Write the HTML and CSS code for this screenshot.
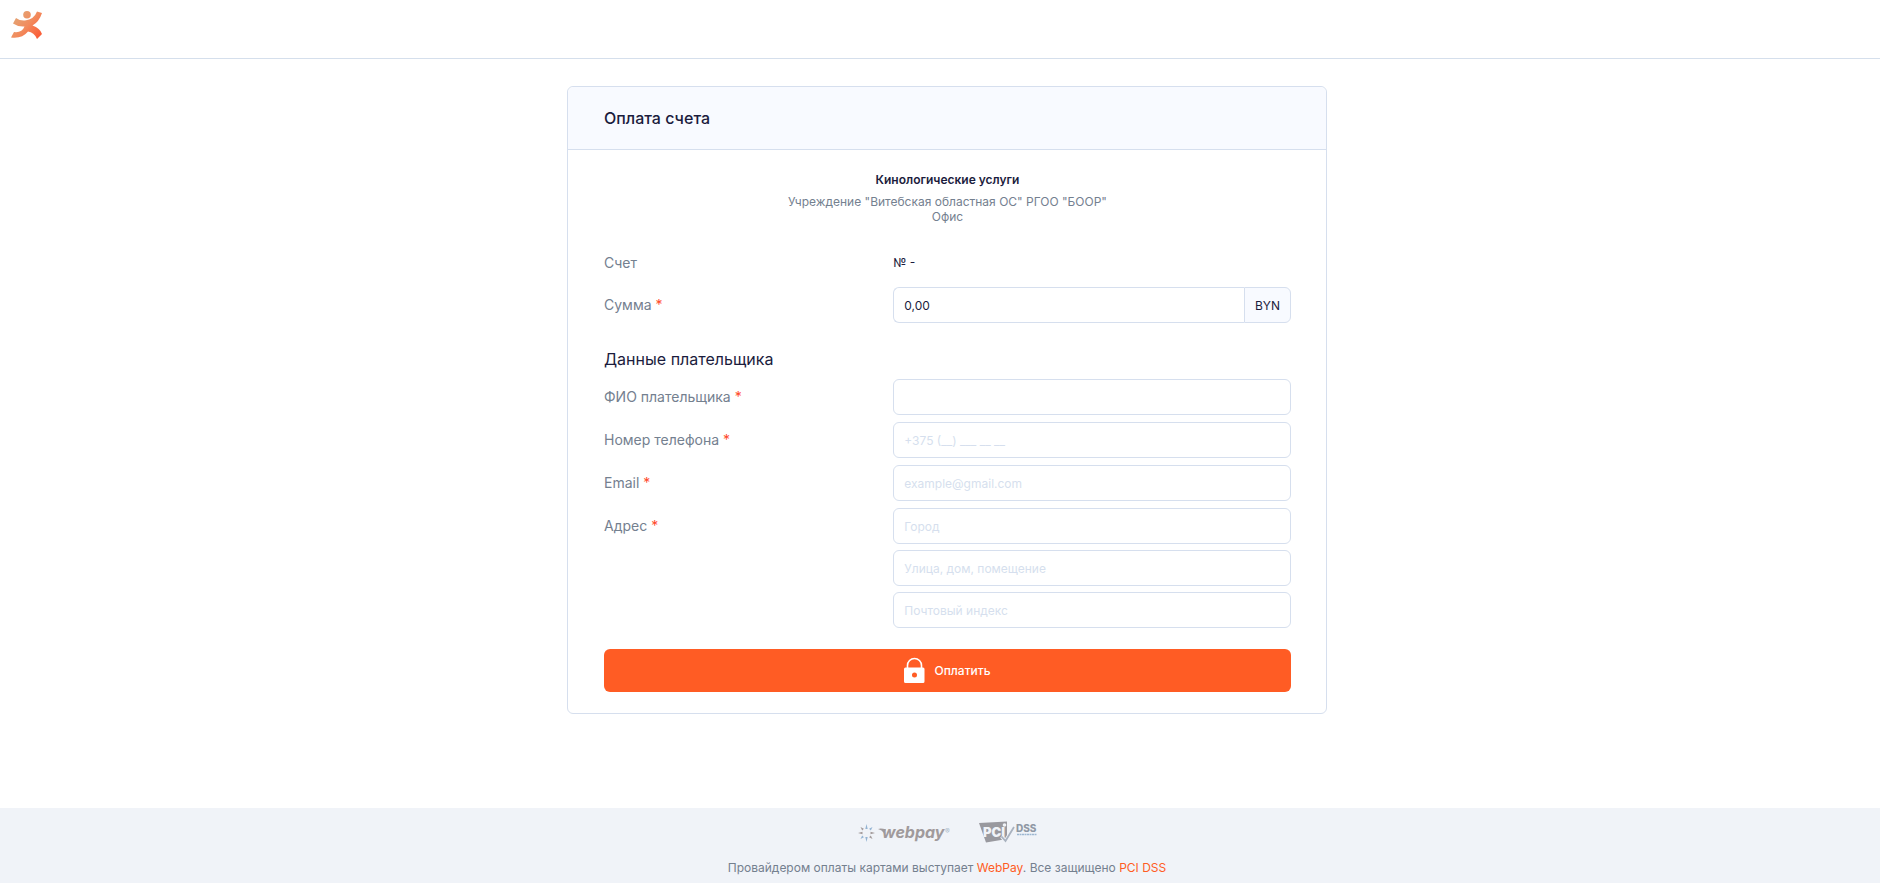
FILE: index.html
```html
<!DOCTYPE html>
<html lang="ru">
<head>
    <meta charset="UTF-8">
    <meta name="viewport" content="width=device-width, initial-scale=1.0">
    <title>Оплата счета</title>
    <link rel="stylesheet" href="styles.css">
</head>
<body>
    <header class="header">
        <a class="header-logo" href="#" aria-label="Главная">
            <svg width="31" height="28" viewBox="0 0 31 28">
                <defs>
                    <linearGradient id="runner" gradientUnits="userSpaceOnUse" x1="4" y1="4" x2="28" y2="26">
                        <stop offset="0" stop-color="#e3a676"/>
                        <stop offset="0.5" stop-color="#f28b5d"/>
                        <stop offset="1" stop-color="#fb5c36"/>
                    </linearGradient>
                </defs>
                <g fill="url(#runner)">
                    <circle cx="16" cy="3.800" r="3.800"/>
                    <path d="M5 7Q9 10 14 9.500Q23 8.500 26 0.500L31 2Q28 11 21.500 14.500Q29 17 31 23L26 28Q23 21 17 20.500Q11 28 0 26.500L3 21Q11 22 13.500 15.500Q7 16 2 12.500Z"/>
                </g>
            </svg>
        </a>
    </header>

    <main class="main">
        <form class="card">
            <div class="card-header">
                <h1 class="card-title">Оплата счета</h1>
            </div>
            <div class="card-body">
                <div class="service">
                    <h2 class="service-name">Кинологические услуги</h2>
                    <p class="service-owner">Учреждение "Витебская областная ОС" РГОО "БООР"<br>Офис</p>
                </div>

                <div class="row row-text">
                    <span class="label">Счет</span>
                    <span class="value">№ -</span>
                </div>
                <div class="row">
                    <label class="label" for="sum">Сумма <span class="required">*</span></label>
                    <div class="input-group">
                        <input class="input" id="sum" type="text" value="0,00">
                        <span class="input-addon">BYN</span>
                    </div>
                </div>

                <h2 class="section-title">Данные плательщика</h2>

                <div class="row">
                    <label class="label" for="fio">ФИО плательщика <span class="required">*</span></label>
                    <input class="input" id="fio" type="text">
                </div>
                <div class="row">
                    <label class="label" for="phone">Номер телефона <span class="required">*</span></label>
                    <input class="input" id="phone" type="tel" placeholder="+375 (__) ___ __ __">
                </div>
                <div class="row">
                    <label class="label" for="email">Email <span class="required">*</span></label>
                    <input class="input" id="email" type="email" placeholder="example@gmail.com">
                </div>
                <div class="row">
                    <label class="label" for="city">Адрес <span class="required">*</span></label>
                    <div class="input-stack">
                        <input class="input" id="city" type="text" placeholder="Город">
                        <input class="input" type="text" aria-label="Улица, дом, помещение" placeholder="Улица, дом, помещение">
                        <input class="input" type="text" aria-label="Почтовый индекс" placeholder="Почтовый индекс">
                    </div>
                </div>

                <button class="pay-button" type="submit">
                    <svg width="21" height="27" viewBox="0 0 21 27">
                        <path d="M3.500 11V8.500a7 7 0 0 1 14 0V11" fill="none" stroke="#fff" stroke-width="1.600"/>
                        <path fill="#fff" fill-rule="evenodd" d="M1.500 10.500H19Q20.500 10.500 20.500 12V24.500Q20.500 26 19 26H1.500Q0 26 0 24.500V12Q0 10.500 1.500 10.500ZM10.500 15.500a2.500 2.500 0 1 0 0 5a2.500 2.500 0 1 0 0-5Z"/>
                    </svg>
                    Оплатить
                </button>
            </div>
        </form>
    </main>

    <footer class="footer">
        <div class="footer-logos">
            <svg width="94" height="26" viewBox="0 0 94 26" role="img" aria-label="webpay">
                <g fill="#93b3d3">
                    <path d="M9.500 4L10.700 9H8.300ZM9.500 22L10.700 17H8.300ZM15.500 7L13.800 10.400L12.100 8.700ZM3.500 19L6.900 17.300L5.200 15.600Z"/>
                </g>
                <g fill="#a39b9b">
                    <path d="M1 13L5.500 11.800V14.200ZM18 13L13.500 11.800V14.200ZM3.500 7L6.900 8.700L5.200 10.400ZM15.500 19L13.800 15.600L12.100 17.300Z"/>
                </g>
                <path d="M21 9Q24 8 29 9.500L27 13Q25 10 21 9Z" fill="#a09a9c"/>
                <text class="logo-webpay" x="25" y="18">webpay</text>
                <text class="logo-mark" x="88" y="14">®</text>
            </svg>
            <svg width="58" height="26" viewBox="0 0 58 26" role="img" aria-label="PCI DSS">
                <path d="M0 3L28 1.500V19L7 22.500Z" fill="#99999f"/>
                <text class="logo-pci" x="4" y="17">PCI</text>
                <circle cx="25.500" cy="5" r="1.800" fill="#f0f3f8"/>
                <path d="M22.500 16.500L26.500 21L35 7" fill="none" stroke="#f0f3f8" stroke-width="3.500"/>
                <path d="M22.500 16.500L26.500 21L35 7" fill="none" stroke="#a9b2bf" stroke-width="1.800"/>
                <text class="logo-dss" x="37" y="12">DSS</text>
                <path d="M38 14.500H58" stroke="#9db7d1" stroke-width="1.500" stroke-dasharray="2 0.500"/>
            </svg>
        </div>
        <p class="footer-text">Провайдером оплаты картами выступает <a href="#">WebPay</a>. Все защищено <a href="#">PCI DSS</a></p>
    </footer>
</body>
</html>
```

FILE: styles.css
```css
* {
    box-sizing: border-box;
}

body {
    margin: 0;
    min-height: 100vh;
    display: flex;
    flex-direction: column;
    background-color: #fff;
    color: #1b1c3d;
    font-family: Inter, Roboto, sans-serif;
    font-size: 12px;
    line-height: 15px;
}

h1,
h2,
p {
    margin: 0;
}

.header {
    height: 59px;
    padding: 11px;
    border-bottom: 1px solid #d5dfec;
}

.header-logo {
    display: inline-block;
}

.header-logo svg {
    display: block;
}

.main {
    flex: 1;
    padding: 27px 0 27px 14px;
}

.card {
    max-width: 760px;
    margin: 0 auto;
    border: 1px solid #d6dfee;
    border-radius: 6px;
}

.card-header {
    padding: 21px 36px;
    background-color: #f8faff;
    border-bottom: 1px solid #d6dfee;
    border-radius: 6px 6px 0 0;
}

.card-title,
.section-title {
    font-size: 16px;
    line-height: 20px;
    font-weight: 500;
}

.card-body {
    padding: 22px 35px 21px 36px;
}

.service {
    margin-bottom: 30px;
    text-align: center;
}

.service-name {
    margin-bottom: 7px;
    font-size: 12px;
    line-height: 15px;
    font-weight: 600;
}

.service-owner {
    color: #74808f;
}

.row {
    display: grid;
    grid-template-columns: 8fr 11fr;
    margin-bottom: 7px;
}

.row-text {
    margin-bottom: 15px;
}

.row-text .label,
.row-text .value {
    line-height: 18px;
}

.label {
    color: #74808f;
    font-size: 14px;
    line-height: 36px;
}

.required {
    color: #ff4a2b;
}

.input {
    width: 100%;
    min-width: 0;
    height: 36px;
    padding: 0 10px;
    border: 1px solid #d6dfee;
    border-radius: 6px;
    background-color: #fff;
    color: #1b1c3d;
    font: inherit;
}

.input::placeholder {
    color: #d6dfee;
    opacity: 1;
}

.input-group {
    display: flex;
}

.input-group .input {
    flex: 1;
    border-radius: 6px 0 0 6px;
    border-right: 0;
}

.input-addon {
    display: flex;
    align-items: center;
    padding: 0 10px;
    background-color: #f8faff;
    border: 1px solid #d6dfee;
    border-radius: 0 6px 6px 0;
}

.input-stack {
    display: grid;
    gap: 6px;
}

.section-title {
    margin: 26px 0 10px;
    font-weight: 400;
}

.pay-button {
    display: flex;
    align-items: center;
    justify-content: center;
    gap: 9px;
    width: 100%;
    height: 43px;
    margin-top: 21px;
    padding: 0;
    border: 0;
    border-radius: 6px;
    background-color: #ff5c24;
    color: #fff;
    font: inherit;
    font-weight: 500;
    cursor: pointer;
}

.footer {
    padding: 12px 0 8px 14px;
    background-color: #f0f3f8;
    color: #74808f;
    text-align: center;
}

.footer-logos {
    display: flex;
    align-items: center;
    justify-content: center;
    gap: 28px;
    margin-bottom: 14px;
}

.footer-text a {
    color: #ff5c24;
    text-decoration: none;
}

.logo-webpay {
    fill: #a09a9c;
    font: italic bold 16px Inter, sans-serif;
}

.logo-mark {
    fill: #a9b9ca;
    font: 7px Inter, sans-serif;
}

.logo-pci {
    fill: #f0f3f8;
    font: 900 13px Inter, sans-serif;
}

.logo-dss {
    fill: #8f98a5;
    font: 800 10px Inter, sans-serif;
}
```
